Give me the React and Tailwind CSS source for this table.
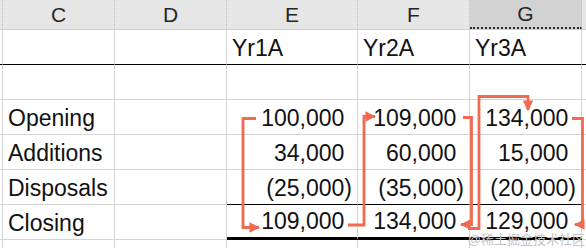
import React from 'react';

const cols = ['C', 'D', 'E', 'F', 'G'];

const rows = [
  { label: '', vals: ['Yr1A', 'Yr2A', 'Yr3A'], head: true },
  { label: '', vals: ['', '', ''] },
  { label: 'Opening', vals: ['100,000', '109,000', '134,000'] },
  { label: 'Additions', vals: ['34,000', '60,000', '15,000'] },
  { label: 'Disposals', vals: ['(25,000)', '(35,000)', '(20,000)'] },
  { label: 'Closing', vals: ['109,000', '134,000', '129,000'] },
];

// Accounting format: positive figures leave room for a closing bracket
const Num = ({ v }) => {
  const neg = v.startsWith('(');
  return (
    <span>
      {v}
      {!neg && <span className="invisible">)</span>}
    </span>
  );
};

const Arrows = () => (
  <svg className="absolute inset-0 pointer-events-none" width="586" height="248">
    <defs>
      <marker id="head" viewBox="0 0 10 10" refX="9" refY="5" markerWidth="3.8" markerHeight="3.8" orient="auto">
        <path d="M0 0 L10 5 L0 10 z" fill="#ef6a50" />
      </marker>
    </defs>
    <g fill="none" stroke="#ef6a50" strokeWidth="2.8" strokeLinejoin="miter">
      <polyline points="256,118.5 243,118.5 243,227.5 259,227.5" markerEnd="url(#head)" />
      <polyline points="348,225 364,225 364,116.5 375,116.5" markerEnd="url(#head)" />
      <polyline points="463,117.5 471.5,117.5 471.5,224.5 461,224.5" markerEnd="url(#head)" />
      <polyline points="468,228.5 479,228.5 479,96.5 528,96.5 528,110" markerEnd="url(#head)" />
      <polyline points="572,118.5 582.5,118.5 582.5,224.5 575,224.5" markerEnd="url(#head)" />
    </g>
  </svg>
);

export default function App() {
  const grid = 'grid grid-cols-[3px_112px_112px_131px_112px_112px_1fr]';
  return (
    <div
      className="relative w-[586px] h-[248px] overflow-hidden bg-white text-[#111]"
      style={{ fontFamily: '"Liberation Sans", Arial, sans-serif' }}
    >
      {/* column headers */}
      <div className={`${grid} h-[30px] bg-[#e6e6e6] border-b border-[#cfcfcf]`}>
        <div className="border-r border-dotted border-[#bdbdbd]" />
        {cols.map((c) => (
          <div
            key={c}
            className={`flex items-center justify-center text-[21px] leading-none text-[#262626] border-r border-dotted border-[#bdbdbd] ${
              c === 'G' ? 'bg-[#d2d2d2] border-b-2 border-b-[#2a2a2a]' : ''
            }`}
          >
            {c}
          </div>
        ))}
        <div />
      </div>

      {rows.map((r, i) => {
        const black = i === 0;
        const subtotal = i === 4;
        const total = i === 5;
        return (
          <div key={i} className={`${grid} h-[35px] text-[23px] leading-none`}>
            <div className={`border-r border-[#d4d4d4] border-b ${black ? 'border-b-black' : 'border-b-[#d4d4d4]'}`} />
            <div className={`flex items-end pl-[5px] pb-[4px] border-r border-b border-r-[#d4d4d4] ${black ? 'border-b-black' : 'border-b-[#d4d4d4]'}`}>
              {r.label}
            </div>
            <div className={`border-r border-b border-r-[#d4d4d4] ${black ? 'border-b-black' : 'border-b-[#d4d4d4]'}`} />
            {r.vals.map((v, j) => (
              <div
                key={j}
                className={`flex items-end pb-[4px] border-r border-r-[#d4d4d4] ${
                  r.head ? 'justify-start pl-[5px]' : 'justify-end pr-[5px]'
                } ${
                  black || subtotal
                    ? 'border-b border-b-black'
                    : total
                    ? 'border-b-[3px] border-b-black'
                    : 'border-b border-b-[#d4d4d4]'
                }`}
              >
                {r.head ? v : <Num v={v} />}
              </div>
            ))}
            <div className={`border-b ${black ? 'border-b-black' : 'border-b-[#d4d4d4]'}`} />
          </div>
        );
      })}

      <div className={`${grid} h-[20px]`}>
        <div className="border-r border-[#d4d4d4]" />
        <div className="border-r border-[#d4d4d4]" />
        <div className="border-r border-[#d4d4d4]" />
        <div className="border-r border-[#d4d4d4]" />
        <div className="border-r border-[#d4d4d4]" />
        <div className="border-r border-[#d4d4d4]" />
        <div />
      </div>

      <Arrows />

      <div
        className="absolute right-[1px] bottom-[2px] text-[13px] leading-none text-[#c4c4c4] whitespace-nowrap"
        style={{ fontFamily: '"Liberation Sans", "Noto Sans CJK SC", sans-serif' }}
      >
        @稀土掘金技术社区
      </div>
    </div>
  );
}
